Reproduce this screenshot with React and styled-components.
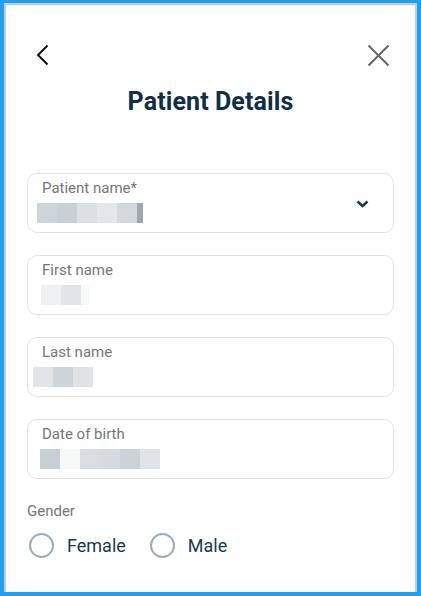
import React from "react";
import styled, { createGlobalStyle } from "styled-components";

const Global = createGlobalStyle`
  html, body { margin: 0; padding: 0; }
  body {
    background: #1da1f2;
    font-family: Roboto, "Noto Sans", Arial, sans-serif;
    width: 421px;
    height: 596px;
    overflow: hidden;
  }
  #root { height: 100%; }
`;

const Frame = styled.div`
  box-sizing: border-box;
  height: 100%;
  padding: 3px 4px 4px 4px;
`;

const Card = styled.div`
  box-sizing: border-box;
  height: 100%;
  background: #fff;
  border: 2px solid #c9c9c9;
  border-bottom: none;
  box-shadow: inset 0 1px 2px rgba(0, 0, 0, 0.08);
  padding: 0 21px 0 21px;
  display: flex;
  flex-direction: column;
`;

const TopBar = styled.div`
  display: flex;
  justify-content: space-between;
  align-items: center;
  height: 24px;
  margin-top: 38px;
  padding: 0 4px 0 9px;
`;

const IconButton = styled.button`
  border: none;
  background: none;
  padding: 0;
  margin: 0;
  display: flex;
  align-items: center;
  justify-content: center;
  cursor: pointer;
`;

const Title = styled.h1`
  margin: 20px 0 0 0;
  text-align: center;
  font-size: 25px;
  font-weight: 700;
  line-height: 30px;
  color: #0f2f47;
  letter-spacing: 0.1px;
`;

const Form = styled.div`
  margin-top: 56px;
  display: flex;
  flex-direction: column;
  gap: 22px;
`;

const Field = styled.div`
  box-sizing: border-box;
  height: 60px;
  border: 1px solid #e2e2e2;
  border-radius: 10px;
  padding: 6px 14px 0 14px;
  display: flex;
  align-items: flex-start;
  justify-content: space-between;
`;

const FieldBody = styled.div`
  display: flex;
  flex-direction: column;
`;

const Label = styled.div`
  font-size: 15px;
  line-height: 17px;
  color: #767676;
`;

const Blur = styled.div`
  display: flex;
  margin-top: 6px;
  margin-left: ${(p) => p.$offset ?? 0}px;
`;

const Block = styled.div`
  width: ${(p) => p.$w ?? 20}px;
  height: 20px;
  background: ${(p) => p.$c};
`;

const Chevron = styled.div`
  display: flex;
  margin-right: 10px;
  margin-top: 20px;
`;

const GenderLabel = styled.div`
  margin-top: 23px;
  font-size: 15px;
  line-height: 18px;
  color: #767676;
`;

const RadioRow = styled.div`
  display: flex;
  align-items: center;
  gap: 24px;
  margin-top: 13px;
  margin-left: 2px;
`;

const RadioOption = styled.label`
  display: flex;
  align-items: center;
  gap: 13px;
  font-size: 18px;
  color: #163a52;
  cursor: pointer;
`;

const Circle = styled.span`
  box-sizing: border-box;
  width: 25px;
  height: 25px;
  border-radius: 50%;
  border: 2px solid #9aabb9;
  display: inline-block;
`;

const fields = [
  {
    label: "Patient name*",
    select: true,
    blurOffset: -5,
    blocks: [
      ["#cfd6da"],
      ["#c8d0d5"],
      ["#dbe0e3"],
      ["#e3e7e9"],
      ["#d2d8db"],
      ["#9aa9b2", 6],
    ],
  },
  {
    label: "First name",
    blurOffset: -1,
    blocks: [["#eef0f1"], ["#e3e6e8"], ["#f7f8f8", 8]],
  },
  {
    label: "Last name",
    blurOffset: -9,
    blocks: [["#e1e5e7"], ["#ced5da"], ["#dfe3e5"]],
  },
  {
    label: "Date of birth",
    blurOffset: -2,
    blocks: [
      ["#c8cfd4"],
      ["#f7f8f8"],
      ["#d8dde0"],
      ["#d6dbdf"],
      ["#ccd3d8"],
      ["#e0e4e6"],
    ],
  },
];

export default function App() {
  return (
    <>
      <Global />
      <Frame>
        <Card>
          <TopBar>
            <IconButton aria-label="Back">
              <svg width="13" height="22" viewBox="0 0 13 22">
                <path d="M11.5 1.5 L2 11 L11.5 20.5" fill="none" stroke="#111" strokeWidth="2" />
              </svg>
            </IconButton>
            <IconButton aria-label="Close">
              <svg width="23" height="23" viewBox="0 0 23 23">
                <path d="M1.5 1.5 L21.5 21.5 M21.5 1.5 L1.5 21.5" fill="none" stroke="#666" strokeWidth="2" />
              </svg>
            </IconButton>
          </TopBar>
          <Title>Patient Details</Title>
          <Form>
            {fields.map((f) => (
              <Field key={f.label}>
                <FieldBody>
                  <Label>{f.label}</Label>
                  <Blur $offset={f.blurOffset}>
                    {f.blocks.map(([c, w], i) => (
                      <Block key={i} $c={c} $w={w} />
                    ))}
                  </Blur>
                </FieldBody>
                {f.select && (
                  <Chevron>
                    <svg width="13" height="8" viewBox="0 0 13 8">
                      <path d="M1.5 1.5 L6.5 6 L11.5 1.5" fill="none" stroke="#163a52" strokeWidth="2.5" />
                    </svg>
                  </Chevron>
                )}
              </Field>
            ))}
          </Form>
          <GenderLabel>Gender</GenderLabel>
          <RadioRow>
            <RadioOption>
              <Circle />
              Female
            </RadioOption>
            <RadioOption>
              <Circle />
              Male
            </RadioOption>
          </RadioRow>
        </Card>
      </Frame>
    </>
  );
}
